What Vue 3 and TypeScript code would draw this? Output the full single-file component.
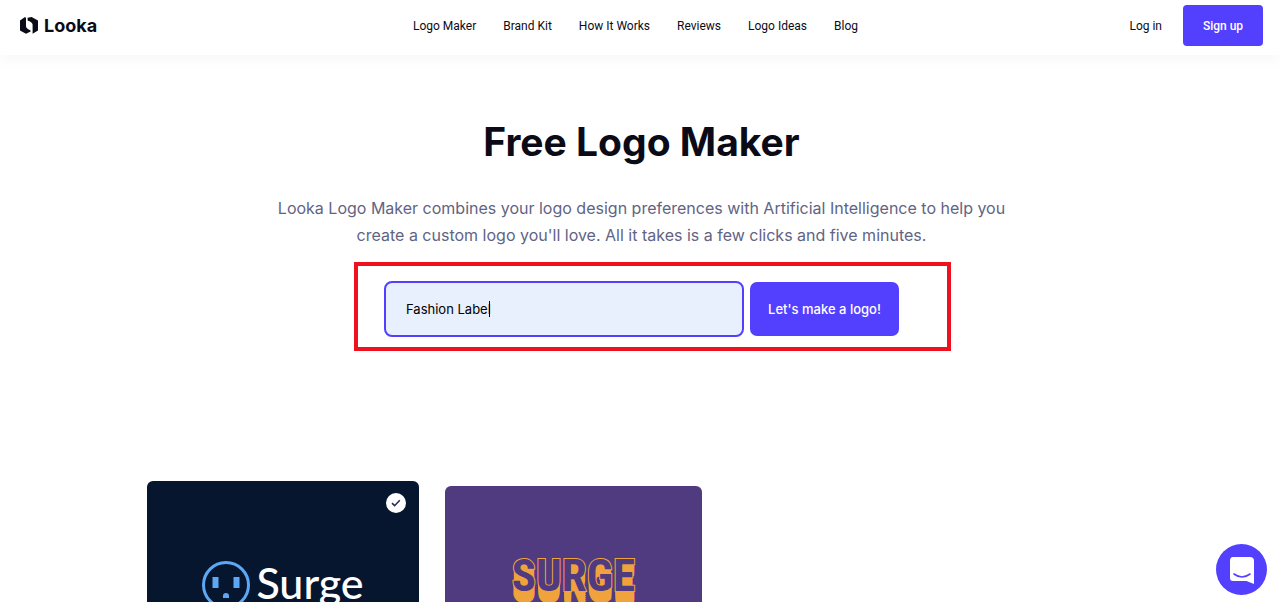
<script setup lang="ts">
import { ref } from 'vue'

const links: string[] = ['Logo Maker', 'Brand Kit', 'How It Works', 'Reviews', 'Logo Ideas', 'Blog']
const company = ref('Fashion Label')
</script>

<template>
  <div class="page">
    <header class="topbar">
      <a class="brand" href="#">
        <svg width="18" height="17" viewBox="0 0 18 17" aria-hidden="true">
          <path d="M0 3.6 L4.6 .3 L6 .5 V9.2 Q6.2 11.6 10.6 13.4 V14.6 L6 16.8 L0 13.6Z M7.6 .8 L11.6 0 L18 3.4 V13.4 L12.6 16.8 V7.4 Q12 5 7.6 3.4Z" fill="#0b0b18" />
        </svg>
        <span>Looka</span>
      </a>
      <nav class="links">
        <a v-for="link in links" :key="link" href="#">{{ link }}</a>
      </nav>
      <div class="account">
        <a href="#">Log in</a>
        <button type="button" class="signup">Sign up</button>
      </div>
    </header>

    <main>
      <section class="hero">
        <h1>Free Logo Maker</h1>
        <p>
          Looka Logo Maker combines your logo design preferences with Artificial Intelligence to help you
          create a custom logo you'll love. All it takes is a few clicks and five minutes.
        </p>
        <form class="maker" @submit.prevent>
          <div class="field">
            <input v-model="company" type="text" aria-label="Company name" />
            <span class="caret"></span>
          </div>
          <button type="submit">Let's make a logo!</button>
          <span class="highlight"></span>
        </form>
      </section>

      <section class="samples">
        <article class="card navy">
          <svg class="tick" width="20" height="20" viewBox="0 0 20 20" aria-hidden="true">
            <circle cx="10" cy="10" r="10" fill="#fff" />
            <path d="M6 10.2 L8.6 12.7 L13.8 7.3" fill="none" stroke="#2b2d55" stroke-width="1.6" />
          </svg>
          <svg width="48" height="48" viewBox="0 0 48 48" aria-hidden="true">
            <circle cx="24" cy="24" r="22.5" fill="none" stroke="#5da8f5" stroke-width="3" />
            <path d="M10.5 16h6v11h-6z M31.5 16h6v11h-6z M21 37v-2a3 3 0 0 1 6 0v2z" fill="#5da8f5" />
          </svg>
          <span class="wordmark">Surge</span>
        </article>
        <article class="card purple">
          <span class="block-word">SURGE</span>
        </article>
      </section>
    </main>

    <button class="chat" type="button" aria-label="Open chat">
      <svg width="26" height="28" viewBox="0 0 26 28" aria-hidden="true">
        <path d="M4 1H21Q25 1 25 5V28L17.5 25H4Q1 25 1 22V5Q1 1 4 1Z" fill="#fff" />
        <path d="M5 18Q13 24 21 18" fill="none" stroke="#5340ff" stroke-width="1.6" stroke-linecap="round" />
      </svg>
    </button>
  </div>
</template>

<style>
body {
  margin: 0;
}
</style>

<style scoped>
.page {
  height: 100vh;
  overflow: hidden;
  background: #fff;
  color: #0b0b18;
  font-family: Inter, "Liberation Sans", sans-serif;
}
a {
  color: inherit;
  text-decoration: none;
}
button {
  border: 0;
  background: #5340ff;
  color: #fff;
  font-family: inherit;
  font-weight: 500;
  cursor: pointer;
}
.topbar {
  display: grid;
  grid-template-columns: 1fr auto 1fr;
  align-items: center;
  padding: 5px 17px 9px 20px;
  box-shadow: 0 6px 14px rgba(20, 20, 70, 0.03);
  font-family: Roboto, "Liberation Sans", sans-serif;
  font-size: 12px;
}
.brand {
  display: flex;
  align-items: center;
  gap: 6px;
  font-family: Inter, "Liberation Sans", sans-serif;
  font-size: 18px;
  line-height: 22px;
  font-weight: 700;
}
.links {
  display: flex;
  gap: 27px;
  padding-right: 12px;
}
.account {
  display: flex;
  justify-content: flex-end;
  align-items: center;
  gap: 21px;
}
.signup {
  height: 41px;
  width: 80px;
  padding: 0;
  border-radius: 4px;
  font-size: 12px;
}
.hero {
  display: flex;
  flex-direction: column;
  align-items: center;
  padding: 63px 0 0 3px;
}
h1 {
  margin: 0;
  font-size: 39px;
  line-height: 48px;
  font-weight: 700;
}
.hero p {
  max-width: 760px;
  margin: 29px 0 0;
  color: #5f6484;
  font-size: 16px;
  line-height: 27px;
  text-align: center;
}
.maker {
  position: relative;
  display: flex;
  align-items: center;
  gap: 6px;
  margin-top: 32px;
}
.field {
  position: relative;
}
.field input {
  box-sizing: border-box;
  display: block;
  width: 360px;
  height: 56px;
  padding: 0 20px;
  border: 2px solid #5340ff;
  border-radius: 8px;
  outline: none;
  background: #e8effd;
  color: #000;
  font-family: inherit;
  font-size: 13px;
}
.caret {
  position: absolute;
  top: 20px;
  left: 105px;
  width: 1px;
  height: 16px;
  background: #000;
}
.maker button {
  width: 149px;
  height: 54px;
  padding: 0;
  border-radius: 7px;
  font-size: 13px;
}
.highlight {
  position: absolute;
  inset: -19px -52px -14px -30px;
  border: 4px solid #ee1220;
  pointer-events: none;
}
.samples {
  display: flex;
  align-items: flex-start;
  gap: 26px;
  width: 986px;
  max-width: 100%;
  margin: 144px auto 0;
}
.card {
  position: relative;
  box-sizing: border-box;
  display: flex;
  align-items: center;
  justify-content: center;
  border-radius: 6px;
}
.navy {
  width: 272px;
  height: 208px;
  gap: 6px;
  background: #06162f;
}
.purple {
  width: 257px;
  height: 196px;
  margin-top: 5px;
  padding-bottom: 16px;
  background: #513b80;
}
.tick {
  position: absolute;
  top: 12px;
  right: 13px;
}
.wordmark {
  padding-bottom: 4px;
  color: #fff;
  font-family: Lato, sans-serif;
  font-size: 43px;
  line-height: 44px;
  font-weight: 500;
}
.block-word {
  color: #513b80;
  font-family: "Roboto Condensed", "Liberation Sans Narrow", "DejaVu Sans Mono", monospace;
  font-size: 45px;
  line-height: 48px;
  font-weight: 700;
  -webkit-text-stroke: 2px #f0a33c;
  paint-order: stroke fill;
  text-shadow: 0 2px #f0a33c, 0 4px #f0a33c, 0 6px #f0a33c, 0 8px #f0a33c, 0 10px #f0a33c, 0 12px #f0a33c;
}
.chat {
  position: fixed;
  right: 13px;
  bottom: 7px;
  display: flex;
  align-items: center;
  justify-content: center;
  width: 51px;
  height: 51px;
  padding: 0;
  border-radius: 50%;
}
</style>
